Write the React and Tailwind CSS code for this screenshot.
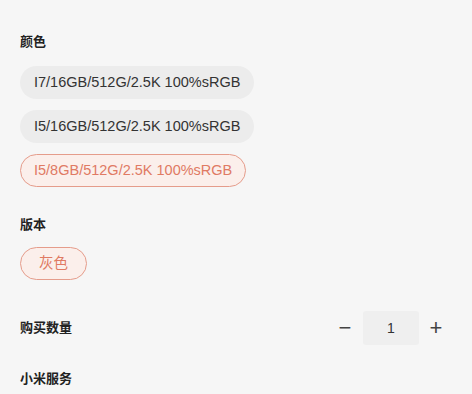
import { useState } from 'react';

const colorOptions = [
  'I7/16GB/512G/2.5K 100%sRGB',
  'I5/16GB/512G/2.5K 100%sRGB',
  'I5/8GB/512G/2.5K 100%sRGB',
];

const Pill = ({ label, active, onClick, wide }) => (
  <button
    onClick={onClick}
    className={
      (wide ? 'px-[18px] ' : 'px-[13px] ') +
      (active
        ? 'h-[33px] rounded-full border-[1.5px] border-[#e59c8b] bg-[#fbefeb] text-[#e07a63] text-[14.5px] leading-none'
        : 'h-[33px] rounded-full border-[1.5px] border-transparent bg-[#ececec] text-[#333] text-[14.5px] leading-none')
    }
  >
    {label}
  </button>
);

export default function App() {
  const [color, setColor] = useState(2);
  const [qty, setQty] = useState(1);

  return (
    <div
      className="w-[472px] h-[394px] overflow-hidden bg-[#f6f6f6] px-5"
      style={{ fontFamily: '"Liberation Sans", "Noto Sans CJK SC", sans-serif' }}
    >
      {/* 颜色 */}
      <div className="pt-[34px] text-[13px] font-bold text-[#222] leading-4">颜色</div>
      <div className="mt-[16px] flex flex-col items-start gap-[11px]">
        {colorOptions.map((c, i) => (
          <Pill key={c} label={c} active={color === i} onClick={() => setColor(i)} />
        ))}
      </div>

      {/* 版本 */}
      <div className="mt-[30px] text-[13px] font-bold text-[#222] leading-4">版本</div>
      <div className="mt-[14px] flex">
        <Pill label="灰色" active wide onClick={() => {}} />
      </div>

      {/* 购买数量 */}
      <div className="mt-[31px] flex items-center justify-between">
        <div className="text-[13px] font-bold text-[#222]">购买数量</div>
        <div className="flex items-center mr-[7px]">
          <button
            onClick={() => setQty(Math.max(1, qty - 1))}
            className="w-[18px] text-[22px] leading-none text-[#444]"
          >
            −
          </button>
          <div className="ml-[9px] w-[56px] h-[34px] rounded-[3px] bg-[#efefef] flex items-center justify-center text-[14px] text-[#333]">
            {qty}
          </div>
          <button
            onClick={() => setQty(qty + 1)}
            className="ml-[8px] w-[18px] text-[22px] leading-none text-[#444]"
          >
            +
          </button>
        </div>
      </div>

      {/* 小米服务 */}
      <div className="mt-[26px] text-[13px] font-bold text-[#222] leading-4">小米服务</div>
    </div>
  );
}
